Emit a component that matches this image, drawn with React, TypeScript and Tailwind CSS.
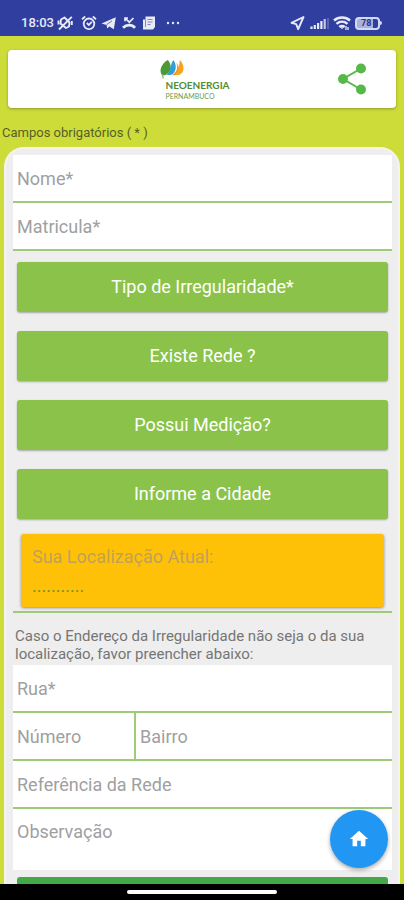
import type { InputHTMLAttributes, ReactNode } from "react";

function StatusBar() {
  return (
    <header className="flex h-9 shrink-0 items-end justify-between bg-[#303f9f] pr-[22px] pb-1 pl-[21px] text-[#e8eaf6]">
      <div className="flex h-[18px] items-center gap-1">
        <span className="w-8 text-[13px] leading-4 font-medium">18:03</span>
        <svg aria-hidden="true" className="h-4 w-4" viewBox="0 0 16 16" fill="none" stroke="currentColor" strokeWidth="1.9" strokeLinejoin="round">
          <path d="M4 4.500 7.500 2.500 12.500 7.500 12 11.500 9 13 3.500 8.500Z" />
          <path d="M14.800 1.800 2 14.500M1.500 5.500v4M14.800 6v4" />
        </svg>
        <svg aria-hidden="true" className="ml-1 h-4 w-4" viewBox="0 0 16 16" fill="none" stroke="currentColor" strokeWidth="1.800">
          <circle cx="8" cy="8.800" r="5.300" />
          <path d="M1 4.200 4.200 1.500M15 4.200 11.800 1.500M5.800 8l2 2 3-3.200" />
        </svg>
        <svg aria-hidden="true" className="h-4 w-4" viewBox="0 0 16 16" fill="currentColor">
          <path d="M.5 8.400 14.800 2.200 12.800 14.200 8.400 11.400 6.200 13.600 5.500 10Z" />
          <path d="M5.500 9.800 11 5.800" stroke="#303f9f" strokeWidth=".7" />
        </svg>
        <svg aria-hidden="true" className="h-4 w-4" viewBox="0 0 16 16" fill="none" stroke="currentColor" strokeWidth="1.700">
          <path d="m4 3 4.300 4.200L12.500 3M4 6.300V3h3" />
          <path d="M2 12.800C5.500 9.300 11 9.300 14 12.800" strokeWidth="2.800" />
        </svg>
        <svg aria-hidden="true" className="h-4 w-4" viewBox="0 0 16 16">
          <path d="M4.500 1.500H14V12l-2 2.500H2v-10h2.500Z" fill="currentColor" />
          <path d="M4.500 4.500V12M6.500 4.500h5M6.500 7h5M6.500 9.500h3" stroke="#7f89c6" strokeWidth="1" />
        </svg>
        <svg aria-hidden="true" className="ml-1 h-4 w-4" viewBox="0 0 16 16" fill="currentColor">
          <circle cx="3" cy="8" r="1.200" />
          <circle cx="8" cy="8" r="1.200" />
          <circle cx="13" cy="8" r="1.200" />
        </svg>
      </div>
      <div className="flex h-[18px] items-center gap-1">
        <svg aria-hidden="true" className="h-4 w-4" viewBox="0 0 16 16" fill="none" stroke="currentColor" strokeWidth="1.900" strokeLinejoin="round">
          <path d="M14.500 2 2.500 7.800 7.200 9.200l2 5Z" />
        </svg>
        <svg aria-hidden="true" className="h-4 w-5" viewBox="0 0 20 16" stroke="currentColor" strokeWidth="2.200">
          <path d="M2.500 14v-2.500M5.800 14v-4M9.100 14V8M12.400 14V6" />
          <path d="M15.700 14V4" opacity=".8" />
          <path d="M19 14V3" opacity=".3" strokeWidth="1.500" />
        </svg>
        <svg aria-hidden="true" className="h-4 w-[18px]" viewBox="0 0 18 16" fill="none" stroke="currentColor" strokeWidth="2.400">
          <path d="M1 5.500C5.500 1.500 12.500 1.500 17 5.500M3.500 8.800c3.300-2.800 7.700-2.800 11 0M6.300 12c1.700-1.400 3.700-1.400 5.400 0" />
          <path d="M9 11.500v2.500M13 11v4M15 12v3" strokeWidth="1.300" />
        </svg>
        <span className="flex items-center">
          <span className="flex h-[13px] w-[25px] items-center rounded-[4px] border-2 border-[#d5d9f0] bg-[linear-gradient(90deg,#aab1dc_75%,#303f9f_75%)] pl-1 text-[9px] leading-[9px] font-bold text-[#283593]">
            78
          </span>
          <span className="h-1 w-[2px] rounded-r-sm bg-[#d5d9f0]" />
        </span>
      </div>
    </header>
  );
}

function Brand() {
  return (
    <div className="mt-[2px] mr-[14px] flex flex-col text-[#6a9c4c]">
      <svg aria-hidden="true" className="h-5 w-6" viewBox="0 0 24 20">
        <path d="M7.800 1C3 3.500 .3 8.500 .6 12.500c.2 2.800 1.800 4 3.800 3.800C8 15.500 10.300 12 10.700 8.500 10.800 5.500 9.600 3 7.800 1Z" fill="#4c9a35" />
        <path d="M1.800 15.500c1 .2 1.400 1.500 1.300 4" fill="none" stroke="#7fb069" strokeWidth="1.200" />
        <path d="M13.200 1c3.300 4 3.300 9.500.6 13-1.500 2-4.300 2.500-7 1.800C10.300 12.500 9.800 7 13.200 1Z" fill="#2f9fd8" />
        <path d="M15.500 3c3.200 4 2 9.500-3 13 2.800.5 4.700 0 6.100-2C20 10 18.800 6 15.500 3Z" fill="#f08a24" />
        <path d="M19.800 1c4 3.500 4.900 9.500 2 13-1.500 2-4.500 2.500-7.200 1.800C18.300 12.500 19 8 19.800 1Z" fill="#f7a61c" />
      </svg>
      <span className="ml-[5px] font-['Lato',sans-serif] text-[10px] leading-3 font-bold text-[#4f8c35]">NEOENERGIA</span>
      <span className="ml-[5px] font-['Lato',sans-serif] text-[7px] leading-[10px]">PERNAMBUCO</span>
    </div>
  );
}

function TopCard() {
  return (
    <div className="relative mx-2 mt-[14px] flex h-[58px] items-center justify-center rounded-[4px] bg-white shadow-[0_1px_3px_rgba(0,0,0,0.3)]">
      <Brand />
      <button type="button" aria-label="Compartilhar" className="absolute right-[28px] flex h-8 w-8 items-center justify-center">
        <svg aria-hidden="true" className="h-8 w-7" viewBox="0 0 28 32" fill="#55b948" stroke="#55b948" strokeWidth="2">
          <path d="M23 5.500 5 16l18 10.500" fill="none" />
          <circle cx="23" cy="5.500" r="4" />
          <circle cx="5" cy="16" r="4" />
          <circle cx="23" cy="26.500" r="4" />
        </svg>
      </button>
    </div>
  );
}

const fieldText = "bg-white px-1 text-lg text-[#757575] placeholder:text-[#a0a0a0] outline-none";

function Field({ label, className = "w-full", ...rest }: { label: string } & InputHTMLAttributes<HTMLInputElement>) {
  return (
    <input
      type="text"
      aria-label={label}
      placeholder={label}
      className={`block h-12 min-w-0 border-b-2 border-[#9ccc76] ${fieldText} ${className}`}
      {...rest}
    />
  );
}

function ActionButton({ children }: { children: ReactNode }) {
  return (
    <button
      type="button"
      className="h-[50px] w-full rounded-[3px] bg-[#8bc34a] text-lg text-white shadow-[0_1px_2px_rgba(0,0,0,0.3)]"
    >
      {children}
    </button>
  );
}

export default function App() {
  return (
    <div className="relative flex h-screen flex-col overflow-hidden bg-[#cddc39] font-['Roboto',sans-serif]">
      <StatusBar />
      <main className="min-h-0 flex-1 overflow-y-auto [scrollbar-width:none]">
        <TopCard />
        <p className="mt-4 ml-[2px] text-[13px] leading-[18px] text-[#57602a]">Campos obrigatórios ( * )</p>
        <form className="mx-1 mt-[5px] rounded-[20px] border-2 border-[#f3f3f0] bg-[#eeeeee] pr-[6px] pl-[7px] pt-[6px] pb-4">
          <Field label="Nome*" name="nome" />
          <Field label="Matricula*" name="matricula" />
          <div className="flex flex-col gap-[19px] px-1 pt-[11px]">
            <ActionButton>Tipo de Irregularidade*</ActionButton>
            <ActionButton>Existe Rede ?</ActionButton>
            <ActionButton>Possui Medição?</ActionButton>
            <ActionButton>Informe a Cidade</ActionButton>
          </div>
          <div className="mt-[15px] border-b-2 border-[#9ccc76] px-2 pb-1">
            <div className="rounded-[3px] bg-[#ffc107] px-[11px] pt-2 pb-2 text-lg shadow-[0_1px_3px_rgba(0,0,0,0.4)]">
              <p className="leading-[30px] text-[#bfa15a]">Sua Localização Atual:</p>
              <p className="leading-[27px] text-[#77922b]">...........</p>
            </div>
          </div>
          <p className="mt-[14px] mb-[2px] px-[2px] text-[15px] leading-[18px] text-[#757575]">
            Caso o Endereço da Irregularidade não seja o da sua localização, favor preencher abaixo:
          </p>
          <Field label="Rua*" name="rua" />
          <div className="flex">
            <Field label="Número" name="numero" className="w-[123px] border-r-2" />
            <Field label="Bairro" name="bairro" className="flex-1" />
          </div>
          <Field label="Referência da Rede" name="referencia" />
          <textarea
            aria-label="Observação"
            placeholder="Observação"
            name="observacao"
            className={`block h-[61px] w-full resize-none pt-[9px] ${fieldText}`}
          />
          <div className="px-1 pt-[7px]">
            <button type="submit" aria-label="Enviar" className="h-[50px] w-full rounded-[3px] bg-[#43a847]" />
          </div>
        </form>
      </main>
      <button
        type="button"
        aria-label="Início"
        className="absolute right-4 bottom-8 flex h-[58px] w-[58px] items-center justify-center rounded-full bg-[#2196f3] shadow-[0_2px_4px_rgba(0,0,0,0.35)]"
      >
        <svg aria-hidden="true" className="h-[22px] w-[22px]" viewBox="0 0 24 24" fill="white">
          <path d="M10 20v-6h4v6h5v-8h3L12 3 2 12h3v8z" />
        </svg>
      </button>
      <footer className="flex h-4 shrink-0 items-center justify-center bg-black">
        <span className="h-1 w-[150px] rounded-full bg-white" />
      </footer>
    </div>
  );
}
